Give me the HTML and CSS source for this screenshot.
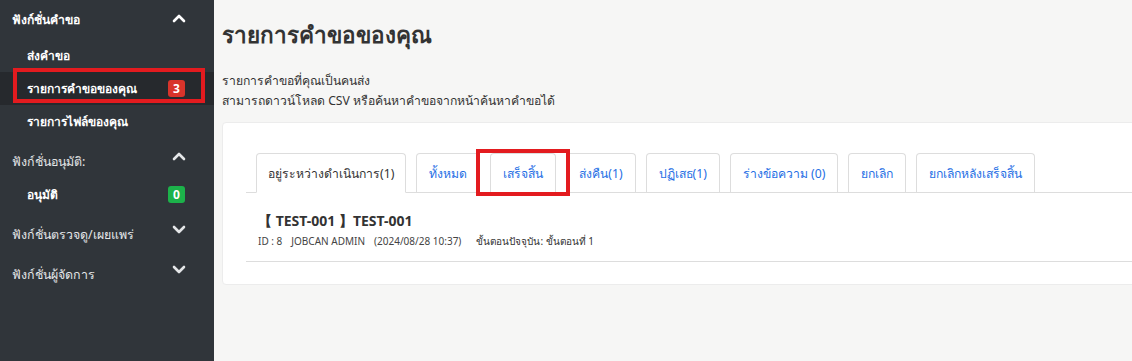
FILE: index.html
```html
<!DOCTYPE html>
<html lang="th">
<head>
  <meta charset="UTF-8">
  <title>รายการคำขอของคุณ</title>
  <link rel="stylesheet" href="styles.css">
</head>
<body>
  <!-- Sidebar -->
  <aside class="sidebar">
    <div class="group">
      <div class="group-head first">
        <span>ฟังก์ชั่นคำขอ</span>
        <svg class="chev" width="14" height="10" viewBox="0 0 14 10"><polyline points="2,8 7,3 12,8" /></svg>
      </div>
      <a href="#" class="item">ส่งคำขอ</a>
      <a href="#" class="item active">
        <span>รายการคำขอของคุณ</span>
        <span class="badge red">3</span>
        <span class="mark side-mark"></span>
      </a>
      <a href="#" class="item">รายการไฟล์ของคุณ</a>
    </div>

    <div class="group">
      <div class="group-head">
        <span>ฟังก์ชั่นอนุมัติ:</span>
        <svg class="chev" width="14" height="10" viewBox="0 0 14 10"><polyline points="2,7 7,2 12,7" /></svg>
      </div>
      <a href="#" class="item">
        <span>อนุมัติ</span>
        <span class="badge green">0</span>
      </a>
    </div>

    <div class="group">
      <div class="group-head">
        <span>ฟังก์ชั่นตรวจดู/เผยแพร่</span>
        <svg class="chev" width="14" height="10" viewBox="0 0 14 10"><polyline points="2,2 7,7 12,2" /></svg>
      </div>
    </div>

    <div class="group">
      <div class="group-head">
        <span>ฟังก์ชั่นผู้จัดการ</span>
        <svg class="chev" width="14" height="10" viewBox="0 0 14 10"><polyline points="2,2 7,7 12,2" /></svg>
      </div>
    </div>
  </aside>

  <!-- Main -->
  <main class="main">
    <h1 class="page-title">รายการคำขอของคุณ</h1>
    <p class="desc">รายการคำขอที่คุณเป็นคนส่ง<br>สามารถดาวน์โหลด CSV หรือค้นหาคำขอจากหน้าค้นหาคำขอได้</p>

    <div class="card">
      <ul class="tabs">
        <li class="tab current">อยู่ระหว่างดำเนินการ(1)</li>
        <li class="tab">ทั้งหมด</li>
        <li class="tab">เสร็จสิ้น<span class="mark tab-mark"></span></li>
        <li class="tab">ส่งคืน(1)</li>
        <li class="tab">ปฏิเสธ(1)</li>
        <li class="tab">ร่างข้อความ (0)</li>
        <li class="tab">ยกเลิก</li>
        <li class="tab">ยกเลิกหลังเสร็จสิ้น</li>
      </ul>

      <div class="request">
        <div class="req-title">【 TEST-001 】TEST-001</div>
        <div class="req-meta">
          <span>ID : 8</span>
          <span>JOBCAN ADMIN</span>
          <span>(2024/08/28 10:37)</span>
          <span class="step">ขั้นตอนปัจจุบัน: ขั้นตอนที่ 1</span>
        </div>
      </div>
    </div>
  </main>
</body>
</html>
```

FILE: styles.css
```css
html, body {
  margin: 0;
  padding: 0;
  height: 100%;
  font-family: "Noto Sans", "Liberation Sans", sans-serif;
  background-color: #f6f6f5;
  color: #333;
  overflow: hidden;
}

body {
  display: flex;
}

/* Sidebar */
.sidebar {
  width: 214px;
  flex-shrink: 0;
  background-color: #30353a;
  height: 100%;
}

.group-head {
  height: 34px;
  margin-top: 6px;
  padding: 0 28px 0 12px;
  display: flex;
  align-items: center;
  justify-content: space-between;
  color: #e4e6e8;
  font-size: 12.4px;
}

.group-head.first {
  height: 39px;
  margin-top: 0;
  color: #fff;
  font-weight: 700;
  font-size: 12.2px;
}

.chev {
  fill: none;
  stroke: #e4e6e8;
  stroke-width: 2.6;
  stroke-linecap: round;
  stroke-linejoin: round;
  margin-top: -8px;
}

.group-head.first .chev {
  stroke: #fff;
  margin-top: -4px;
}

.item {
  position: relative;
  height: 33px;
  padding: 0 29px 0 27px;
  display: flex;
  align-items: center;
  justify-content: space-between;
  color: #fff;
  font-size: 12px;
  font-weight: 700;
  text-decoration: none;
}

.item.active {
  background-color: #26292d;
}

.badge {
  min-width: 17px;
  height: 17px;
  border-radius: 3px;
  font-size: 12px;
  font-weight: 700;
  color: #fff;
  display: flex;
  align-items: center;
  justify-content: center;
}

.badge.red {
  background-color: #d8342b;
}

.badge.green {
  background-color: #1cb24a;
}

/* red annotation boxes */
.mark {
  position: absolute;
  z-index: 2;
  border: 4px solid #e31b1f;
  pointer-events: none;
}

.side-mark {
  left: 13px;
  top: -4px;
  width: 184px;
  height: 27px;
}

.tab-mark {
  left: -15px;
  right: -15px;
  top: -5px;
  height: 39px;
}

/* Main */
.main {
  flex: 1;
  padding: 0 0 0 8px;
  min-width: 0;
}

.page-title {
  margin: 0;
  padding-top: 19px;
  font-size: 22.5px;
  font-weight: 700;
  line-height: 32px;
  color: #333;
}

.desc {
  margin: 20px 0 0 0;
  font-size: 12.2px;
  line-height: 20px;
  color: #333;
}

.card {
  margin-top: 11px;
  width: 960px;
  background-color: #fff;
  border: 1px solid #ececec;
  border-radius: 4px;
  padding: 30px 0 22px 23px;
}

.tabs {
  list-style: none;
  margin: 0;
  padding: 0 0 0 10px;
  display: flex;
  gap: 10px;
  border-bottom: 1px solid #ddd;
}

.tab {
  position: relative;
  height: 38px;
  padding: 0 12px;
  margin-bottom: -1px;
  display: flex;
  align-items: center;
  border: 1px solid #ddd;
  border-bottom: none;
  border-radius: 4px 4px 0 0;
  font-size: 12.2px;
  color: #1f6fe5;
  background-color: #fff;
}

.tab.current {
  padding: 0 11px;
  color: #333;
  border-bottom: 1px solid #fff;
}

.request {
  padding: 18px 0 0 12px;
  height: 50px;
  border-bottom: 1px solid #ddd;
}

.req-title {
  font-size: 14px;
  font-weight: 700;
  color: #333;
  line-height: 20px;
}

.req-meta {
  font-size: 10px;
  color: #444;
  line-height: 20px;
  display: flex;
  gap: 9px;
}

.req-meta .step {
  margin-left: 6px;
  color: #333;
}
```
